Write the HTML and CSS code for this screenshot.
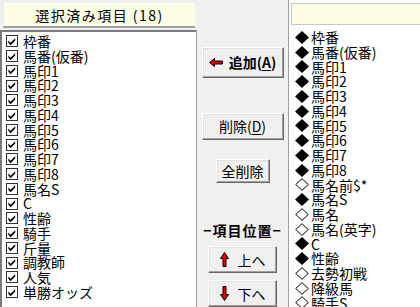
FILE: index.html
```html
<!DOCTYPE html>
<html lang="ja">
<head>
    <meta charset="UTF-8">
    <title>項目選択</title>
    <link rel="stylesheet" href="styles.css">
</head>
<body>
    <div class="dialog">
        <div class="col left">
            <div class="caption">選択済み項目 (18)</div>
            <div class="list">
                <div class="row"><span class="chk"><svg width="11" height="11" viewBox="0 0 11 11"><path d="M1.5 4.5 L4 7 L9 2 L9 4.5 L4 9.5 L1.5 7 Z" fill="#000"/></svg></span>枠番</div>
                <div class="row"><span class="chk"><svg width="11" height="11" viewBox="0 0 11 11"><path d="M1.5 4.5 L4 7 L9 2 L9 4.5 L4 9.5 L1.5 7 Z" fill="#000"/></svg></span>馬番(仮番)</div>
                <div class="row"><span class="chk"><svg width="11" height="11" viewBox="0 0 11 11"><path d="M1.5 4.5 L4 7 L9 2 L9 4.5 L4 9.5 L1.5 7 Z" fill="#000"/></svg></span>馬印1</div>
                <div class="row"><span class="chk"><svg width="11" height="11" viewBox="0 0 11 11"><path d="M1.5 4.5 L4 7 L9 2 L9 4.5 L4 9.5 L1.5 7 Z" fill="#000"/></svg></span>馬印2</div>
                <div class="row"><span class="chk"><svg width="11" height="11" viewBox="0 0 11 11"><path d="M1.5 4.5 L4 7 L9 2 L9 4.5 L4 9.5 L1.5 7 Z" fill="#000"/></svg></span>馬印3</div>
                <div class="row"><span class="chk"><svg width="11" height="11" viewBox="0 0 11 11"><path d="M1.5 4.5 L4 7 L9 2 L9 4.5 L4 9.5 L1.5 7 Z" fill="#000"/></svg></span>馬印4</div>
                <div class="row"><span class="chk"><svg width="11" height="11" viewBox="0 0 11 11"><path d="M1.5 4.5 L4 7 L9 2 L9 4.5 L4 9.5 L1.5 7 Z" fill="#000"/></svg></span>馬印5</div>
                <div class="row"><span class="chk"><svg width="11" height="11" viewBox="0 0 11 11"><path d="M1.5 4.5 L4 7 L9 2 L9 4.5 L4 9.5 L1.5 7 Z" fill="#000"/></svg></span>馬印6</div>
                <div class="row"><span class="chk"><svg width="11" height="11" viewBox="0 0 11 11"><path d="M1.5 4.5 L4 7 L9 2 L9 4.5 L4 9.5 L1.5 7 Z" fill="#000"/></svg></span>馬印7</div>
                <div class="row"><span class="chk"><svg width="11" height="11" viewBox="0 0 11 11"><path d="M1.5 4.5 L4 7 L9 2 L9 4.5 L4 9.5 L1.5 7 Z" fill="#000"/></svg></span>馬印8</div>
                <div class="row"><span class="chk"><svg width="11" height="11" viewBox="0 0 11 11"><path d="M1.5 4.5 L4 7 L9 2 L9 4.5 L4 9.5 L1.5 7 Z" fill="#000"/></svg></span>馬名S</div>
                <div class="row"><span class="chk"><svg width="11" height="11" viewBox="0 0 11 11"><path d="M1.5 4.5 L4 7 L9 2 L9 4.5 L4 9.5 L1.5 7 Z" fill="#000"/></svg></span>C</div>
                <div class="row"><span class="chk"><svg width="11" height="11" viewBox="0 0 11 11"><path d="M1.5 4.5 L4 7 L9 2 L9 4.5 L4 9.5 L1.5 7 Z" fill="#000"/></svg></span>性齢</div>
                <div class="row"><span class="chk"><svg width="11" height="11" viewBox="0 0 11 11"><path d="M1.5 4.5 L4 7 L9 2 L9 4.5 L4 9.5 L1.5 7 Z" fill="#000"/></svg></span>騎手</div>
                <div class="row"><span class="chk"><svg width="11" height="11" viewBox="0 0 11 11"><path d="M1.5 4.5 L4 7 L9 2 L9 4.5 L4 9.5 L1.5 7 Z" fill="#000"/></svg></span>斤量</div>
                <div class="row"><span class="chk"><svg width="11" height="11" viewBox="0 0 11 11"><path d="M1.5 4.5 L4 7 L9 2 L9 4.5 L4 9.5 L1.5 7 Z" fill="#000"/></svg></span>調教師</div>
                <div class="row"><span class="chk"><svg width="11" height="11" viewBox="0 0 11 11"><path d="M1.5 4.5 L4 7 L9 2 L9 4.5 L4 9.5 L1.5 7 Z" fill="#000"/></svg></span>人気</div>
                <div class="row"><span class="chk"><svg width="11" height="11" viewBox="0 0 11 11"><path d="M1.5 4.5 L4 7 L9 2 L9 4.5 L4 9.5 L1.5 7 Z" fill="#000"/></svg></span>単勝オッズ</div>
            </div>
        </div>

        <div class="mid">
            <button type="button" class="btn add">
                <svg width="14" height="9" viewBox="0 0 14 9"><path d="M0.5 4.5 L5.5 0.5 L5.5 3 L13.5 3 L13.5 6 L5.5 6 L5.5 8.5 Z" fill="#e00000" stroke="#000" stroke-width="1"/></svg>
                <b>追加(<u>A</u>)</b>
            </button>
            <button type="button" class="btn del"><span>削除(<u>D</u>)</span></button>
            <button type="button" class="btn clear">全削除</button>
            <div class="pos-label">−項目位置−</div>
            <button type="button" class="btn move">
                <svg width="9" height="15" viewBox="0 0 9 15"><path d="M4.5 0.5 L8.5 6.5 L6 6.5 L6 14.5 L3 14.5 L3 6.5 L0.5 6.5 Z" fill="#e00000" stroke="#000" stroke-width="1"/></svg>
                <span>上へ</span>
            </button>
            <button type="button" class="btn move">
                <svg width="9" height="15" viewBox="0 0 9 15"><path d="M4.5 14.5 L8.5 8.5 L6 8.5 L6 0.5 L3 0.5 L3 8.5 L0.5 8.5 Z" fill="#e00000" stroke="#000" stroke-width="1"/></svg>
                <span>下へ</span>
            </button>
        </div>

        <div class="col right">
            <div class="caption"></div>
            <div class="list">
                <div class="row"><svg class="mark" viewBox="0 0 14 13"><path d="M7 0 L14 6.5 L7 13 L0 6.5 Z" fill="#000"/></svg>枠番</div>
                <div class="row"><svg class="mark" viewBox="0 0 14 13"><path d="M7 0 L14 6.5 L7 13 L0 6.5 Z" fill="#000"/></svg>馬番(仮番)</div>
                <div class="row"><svg class="mark" viewBox="0 0 14 13"><path d="M7 0 L14 6.5 L7 13 L0 6.5 Z" fill="#000"/></svg>馬印1</div>
                <div class="row"><svg class="mark" viewBox="0 0 14 13"><path d="M7 0 L14 6.5 L7 13 L0 6.5 Z" fill="#000"/></svg>馬印2</div>
                <div class="row"><svg class="mark" viewBox="0 0 14 13"><path d="M7 0 L14 6.5 L7 13 L0 6.5 Z" fill="#000"/></svg>馬印3</div>
                <div class="row"><svg class="mark" viewBox="0 0 14 13"><path d="M7 0 L14 6.5 L7 13 L0 6.5 Z" fill="#000"/></svg>馬印4</div>
                <div class="row"><svg class="mark" viewBox="0 0 14 13"><path d="M7 0 L14 6.5 L7 13 L0 6.5 Z" fill="#000"/></svg>馬印5</div>
                <div class="row"><svg class="mark" viewBox="0 0 14 13"><path d="M7 0 L14 6.5 L7 13 L0 6.5 Z" fill="#000"/></svg>馬印6</div>
                <div class="row"><svg class="mark" viewBox="0 0 14 13"><path d="M7 0 L14 6.5 L7 13 L0 6.5 Z" fill="#000"/></svg>馬印7</div>
                <div class="row"><svg class="mark" viewBox="0 0 14 13"><path d="M7 0 L14 6.5 L7 13 L0 6.5 Z" fill="#000"/></svg>馬印8</div>
                <div class="row"><svg class="mark" viewBox="0 0 14 13"><path d="M7 0.7 L13.3 6.5 L7 12.3 L0.7 6.5 Z" fill="none" stroke="#000"/></svg>馬名前$*</div>
                <div class="row"><svg class="mark" viewBox="0 0 14 13"><path d="M7 0 L14 6.5 L7 13 L0 6.5 Z" fill="#000"/></svg>馬名S</div>
                <div class="row"><svg class="mark" viewBox="0 0 14 13"><path d="M7 0.7 L13.3 6.5 L7 12.3 L0.7 6.5 Z" fill="none" stroke="#000"/></svg>馬名</div>
                <div class="row"><svg class="mark" viewBox="0 0 14 13"><path d="M7 0.7 L13.3 6.5 L7 12.3 L0.7 6.5 Z" fill="none" stroke="#000"/></svg>馬名(英字)</div>
                <div class="row"><svg class="mark" viewBox="0 0 14 13"><path d="M7 0 L14 6.5 L7 13 L0 6.5 Z" fill="#000"/></svg>C</div>
                <div class="row"><svg class="mark" viewBox="0 0 14 13"><path d="M7 0 L14 6.5 L7 13 L0 6.5 Z" fill="#000"/></svg>性齢</div>
                <div class="row"><svg class="mark" viewBox="0 0 14 13"><path d="M7 0.7 L13.3 6.5 L7 12.3 L0.7 6.5 Z" fill="none" stroke="#000"/></svg>去勢初戦</div>
                <div class="row"><svg class="mark" viewBox="0 0 14 13"><path d="M7 0.7 L13.3 6.5 L7 12.3 L0.7 6.5 Z" fill="none" stroke="#000"/></svg>降級馬</div>
                <div class="row"><svg class="mark" viewBox="0 0 14 13"><path d="M7 0.7 L13.3 6.5 L7 12.3 L0.7 6.5 Z" fill="none" stroke="#000"/></svg>騎手S</div>
            </div>
        </div>
    </div>
</body>
</html>
```

FILE: styles.css
```css
body {
    margin: 0;
    padding: 0;
    background-color: #f0f0f0;
    font-family: "Noto Sans CJK JP", "DejaVu Sans", sans-serif;
    font-size: 14px;
    color: #000;
    overflow: hidden;
}
.dialog {
    display: flex;
    width: 420px;
    height: 307px;
    overflow: hidden;
}
.col {
    display: flex;
    flex-direction: column;
}
.left {
    width: 196px;
}
.right {
    flex: 1;
    background-color: #fff;
    border-left: 1px solid #a0a0a0;
}
.caption {
    height: 22px;
    margin: 3px 1px 2px 3px;
    background-color: #ffffe6;
    border-top: 1px solid #fff;
    border-left: 1px solid #e8e8e8;
    border-bottom: 2px solid #a0a0a0;
    text-align: center;
    line-height: 22px;
    letter-spacing: 1.5px;
}
.right .caption {
    margin: 3px 0 3px 2px;
    border: 1px solid #c8c8c8;
    border-right: none;
    height: 20px;
}
.list {
    flex: 1;
    background-color: #fff;
    padding-top: 2px;
    overflow: hidden;
}
.left .list {
    border-left: 2px solid #7a7a7a;
    border-top: 2px solid #7a7a7a;
    padding-left: 4px;
}
.right .list {
    padding-left: 6px;
}
.row {
    height: 14.76px;
    line-height: 14.76px;
    white-space: nowrap;
    display: flex;
    align-items: center;
}
.chk {
    width: 10px;
    height: 10px;
    border: 1px solid #333;
    margin-right: 5px;
    display: flex;
    align-items: center;
    justify-content: center;
}
.chk svg {
    display: block;
}
.mark {
    width: 14px;
    height: 13px;
    margin-right: 2px;
    flex: none;
}
.mid {
    width: 91px;
    border-left: 1px solid #a0a0a0;
    display: flex;
    flex-direction: column;
    align-items: center;
    margin-top: 30px;
}
.btn {
    font-family: inherit;
    font-size: 14px;
    color: #000;
    background-color: #f0f0f0;
    padding: 0;
    border: 1px solid;
    border-color: #fff #696969 #696969 #fff;
    box-shadow: inset -1px -1px #a0a0a0, inset 1px 1px #e3e3e3;
    display: flex;
    align-items: center;
    justify-content: center;
    gap: 6px;
}
.btn u {
    text-underline-offset: 2px;
}
.add {
    width: 82px;
    height: 31px;
    margin-top: 17px;
}
.add b {
    font-weight: bold;
}
.del {
    width: 82px;
    height: 27px;
    margin-top: 35px;
}
.clear {
    width: 54px;
    height: 25px;
    margin-top: 19px;
}
.pos-label {
    margin-top: 39px;
    height: 16px;
    line-height: 16px;
    font-weight: bold;
    letter-spacing: 1px;
}
.move {
    width: 69px;
    height: 27px;
    margin-top: 8px;
    gap: 9px;
}
.move + .move {
    margin-top: 7px;
}
```
